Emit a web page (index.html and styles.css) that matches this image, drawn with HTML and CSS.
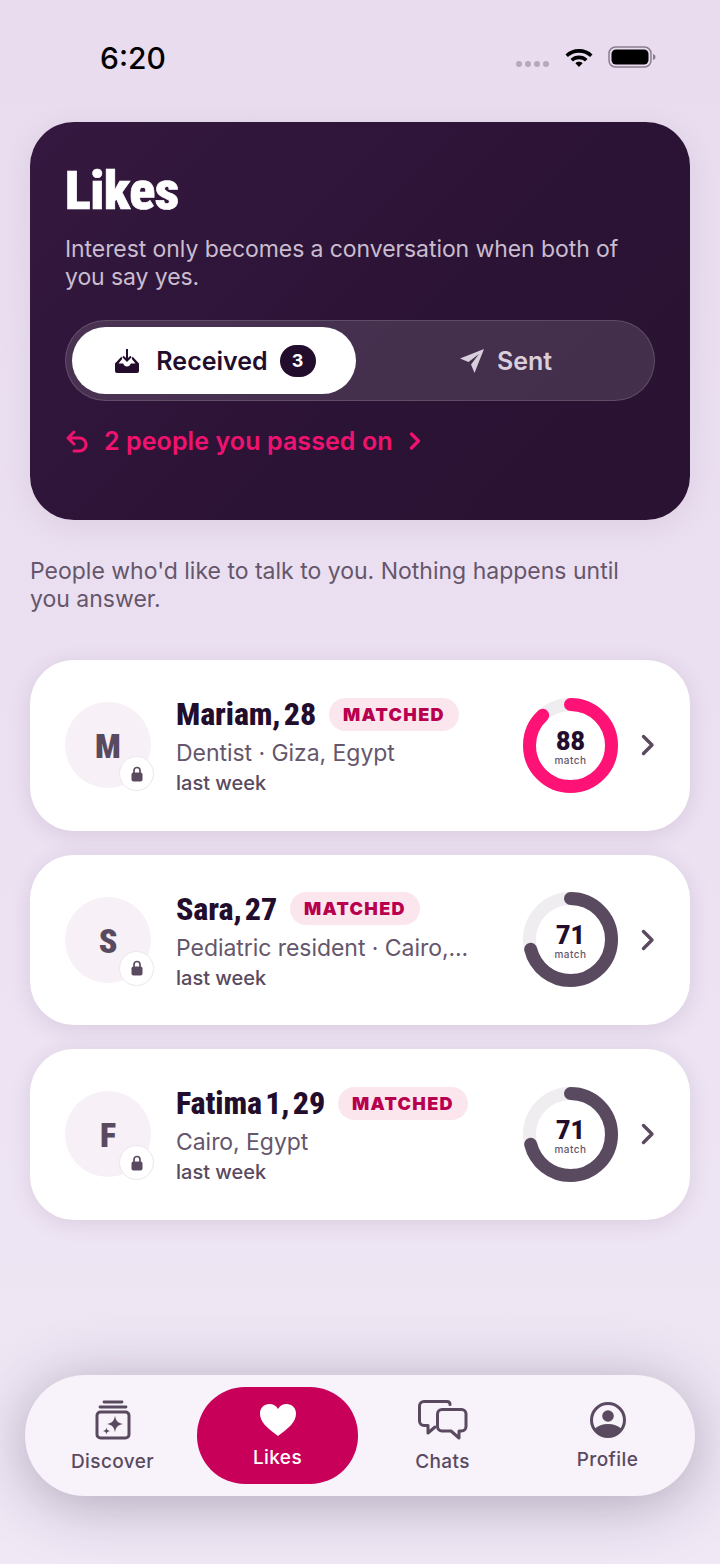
FILE: index.html
```html
<!DOCTYPE html>
<html lang="en">
<head>
  <meta charset="UTF-8" />
  <meta name="viewport" content="width=device-width, initial-scale=1.0">
  <title>Likes</title>
  <link rel="stylesheet" href="styles.css">
</head>
<body>
  <div class="screen">
    <div class="status-bar">
      <span class="time">6:20</span>
      <div class="status-icons">
        <div class="signal"><i></i><i></i><i></i><i></i></div>
        <svg class="wifi" viewBox="0 0 30 22"><path d="M15 3C9.6 3 5 5 1.500 8.400L3.900 11C7 8.200 10.800 6.700 15 6.700S23 8.200 26.100 11L28.500 8.400C25 5 20.400 3 15 3ZM15 9.500C11.700 9.500 8.800 10.700 6.500 12.900L9 15.500C10.600 14 12.700 13.200 15 13.200S19.400 14 21 15.500L23.500 12.900C21.200 10.700 18.300 9.500 15 9.500ZM15 15.800C13.600 15.800 12.400 16.300 11.400 17.200L15 21L18.600 17.200C17.600 16.300 16.400 15.800 15 15.800Z" fill="#000"/></svg>
        <svg class="battery" viewBox="0 0 48 22"><rect x="1" y="1" width="42" height="20" rx="6.500" fill="none" stroke="#8a7f8e" stroke-width="1.500"/><rect x="3.500" y="3.500" width="37" height="15" rx="4.500" fill="#000"/><path d="M45 8C46.800 8.500 47.500 9.600 47.500 11S46.800 13.500 45 14Z" fill="#8a7f8e"/></svg>
      </div>
    </div>

    <section class="hero">
      <h1>Likes</h1>
      <p class="hero-sub">Interest only becomes a conversation when both of you say yes.</p>
      <div class="tabs">
        <div class="tab tab-active">
          <svg class="tab-icon" viewBox="0 0 26 26"><path d="M13 1v11.500M9 8.500l4 4 4-4" fill="none" stroke="#230d2d" stroke-width="2"/><path d="M7.500 8.500 1 15.500V23a2 2 0 0 0 2 2h20a2 2 0 0 0 2-2v-7.500L18.500 8.500 17.800 11l3.700 4.500h-4.700c-.7 2-2 3-3.800 3s-3.100-1-3.800-3H4.500L8.200 11Z" fill="#230d2d"/></svg>
          <span>Received</span>
          <span class="tab-count">3</span>
        </div>
        <div class="tab">
          <svg class="tab-icon" viewBox="0 0 26 26"><path d="M25 1 1 10.500l8.500 3.500L20 6l-8 10.500 3.500 8.500Z" fill="#d9cfdc"/></svg>
          <span>Sent</span>
        </div>
      </div>
      <div class="passed">
        <svg class="passed-back" viewBox="0 0 24 24"><path d="M9 3 3 9l6 6M3 9h11.500a6.500 6.500 0 0 1 0 13H9" fill="none" stroke="#f0126f" stroke-width="3" stroke-linecap="round" stroke-linejoin="round"/></svg>
        <span>2 people you passed on</span>
        <svg class="passed-chev" viewBox="0 0 12 18"><path d="M2.500 2 9.500 9l-7 7" fill="none" stroke="#f0126f" stroke-width="3.200" stroke-linecap="round" stroke-linejoin="round"/></svg>
      </div>
    </section>

    <p class="intro">People who'd like to talk to you. Nothing happens until you answer.</p>

    <div class="cards">
      <article class="card">
        <div class="avatar">
          <span>M</span>
          <div class="lock"><svg viewBox="0 0 12 16"><path d="M3 7V4.500a3 3 0 0 1 6 0V7" fill="none" stroke="#5a4a60" stroke-width="1.700"/><rect x="0.500" y="6.500" width="11" height="9" rx="2" fill="#5a4a60"/></svg></div>
        </div>
        <div class="info">
          <div class="name-row"><span class="name">Mariam, 28</span><span class="badge">MATCHED</span></div>
          <div class="job">Dentist · Giza, Egypt</div>
          <div class="when">last week</div>
        </div>
        <div class="ring">
          <svg viewBox="0 0 95 95"><circle cx="47.500" cy="47.500" r="41" class="ring-track"/><circle cx="47.500" cy="47.500" r="41" class="ring-bar ring-hot" stroke-dasharray="226.700 257.600"/></svg>
          <div class="ring-label"><b>88</b><small>match</small></div>
        </div>
        <svg class="chev" viewBox="0 0 14 22"><path d="M2.500 2.500 11 11l-8.500 8.500" fill="none" stroke="#5a4a60" stroke-width="3.400" stroke-linecap="round" stroke-linejoin="round"/></svg>
      </article>

      <article class="card">
        <div class="avatar">
          <span>S</span>
          <div class="lock"><svg viewBox="0 0 12 16"><path d="M3 7V4.500a3 3 0 0 1 6 0V7" fill="none" stroke="#5a4a60" stroke-width="1.700"/><rect x="0.500" y="6.500" width="11" height="9" rx="2" fill="#5a4a60"/></svg></div>
        </div>
        <div class="info">
          <div class="name-row"><span class="name">Sara, 27</span><span class="badge">MATCHED</span></div>
          <div class="job">Pediatric resident · Cairo,...</div>
          <div class="when">last week</div>
        </div>
        <div class="ring">
          <svg viewBox="0 0 95 95"><circle cx="47.500" cy="47.500" r="41" class="ring-track"/><circle cx="47.500" cy="47.500" r="41" class="ring-bar" stroke-dasharray="182.900 257.600"/></svg>
          <div class="ring-label"><b>71</b><small>match</small></div>
        </div>
        <svg class="chev" viewBox="0 0 14 22"><path d="M2.500 2.500 11 11l-8.500 8.500" fill="none" stroke="#5a4a60" stroke-width="3.400" stroke-linecap="round" stroke-linejoin="round"/></svg>
      </article>

      <article class="card">
        <div class="avatar">
          <span>F</span>
          <div class="lock"><svg viewBox="0 0 12 16"><path d="M3 7V4.500a3 3 0 0 1 6 0V7" fill="none" stroke="#5a4a60" stroke-width="1.700"/><rect x="0.500" y="6.500" width="11" height="9" rx="2" fill="#5a4a60"/></svg></div>
        </div>
        <div class="info">
          <div class="name-row"><span class="name">Fatima 1, 29</span><span class="badge">MATCHED</span></div>
          <div class="job">Cairo, Egypt</div>
          <div class="when">last week</div>
        </div>
        <div class="ring">
          <svg viewBox="0 0 95 95"><circle cx="47.500" cy="47.500" r="41" class="ring-track"/><circle cx="47.500" cy="47.500" r="41" class="ring-bar" stroke-dasharray="182.900 257.600"/></svg>
          <div class="ring-label"><b>71</b><small>match</small></div>
        </div>
        <svg class="chev" viewBox="0 0 14 22"><path d="M2.500 2.500 11 11l-8.500 8.500" fill="none" stroke="#5a4a60" stroke-width="3.400" stroke-linecap="round" stroke-linejoin="round"/></svg>
      </article>
    </div>

    <nav class="tabbar">
      <div class="nav-item">
        <svg class="nav-discover" viewBox="0 0 36 40"><path d="M9 2h18M5 7h26" stroke="#5a4a60" stroke-width="2.800" fill="none" stroke-linecap="round"/><rect x="2" y="12" width="32" height="26" rx="3.500" fill="none" stroke="#5a4a60" stroke-width="3"/><path d="M20 15.500c.8 5.500 3 7.700 8.500 8.500-5.500.8-7.700 3-8.500 8.500-.8-5.500-3-7.700-8.500-8.500 5.500-.8 7.700-3 8.500-8.500ZM11.500 27.500c.4 2.300 1.200 3.100 3.500 3.500-2.300.4-3.100 1.200-3.500 3.500-.4-2.300-1.200-3.100-3.500-3.500 2.300-.4 3.100-1.200 3.500-3.500Z" fill="#5a4a60"/></svg>
        <span>Discover</span>
      </div>
      <div class="nav-item nav-active">
        <svg class="nav-heart" viewBox="0 0 36 32"><path d="M18 32C7 24 0 18 0 9.500 0 4 4 0 9.500 0 13 0 16.200 1.800 18 5 19.800 1.800 23 0 26.500 0 32 0 36 4 36 9.500 36 18 29 24 18 32Z" fill="#fff"/></svg>
        <span>Likes</span>
      </div>
      <div class="nav-item">
        <svg class="nav-chats" viewBox="0 0 50 40"><path d="M32 4.500C32 2.500 30.500 1.500 29 1.500H6C3.500 1.500 1.500 3.500 1.500 6v15c0 2.500 2 4.500 4.500 4.500h4V33l7-6" fill="none" stroke="#5a4a60" stroke-width="3" stroke-linecap="round" stroke-linejoin="round"/><path d="M24 9.500h19.500c2.500 0 4.500 2 4.500 4.500v12.500c0 2.500-2 4.500-4.500 4.500H41v7l-8-7h-9c-2.500 0-4.500-2-4.500-4.500V14c0-2.500 2-4.500 4.500-4.500Z" fill="none" stroke="#5a4a60" stroke-width="3" stroke-linejoin="round"/></svg>
        <span>Chats</span>
      </div>
      <div class="nav-item">
        <svg class="nav-profile" viewBox="0 0 36 36"><circle cx="18" cy="18" r="16.500" fill="none" stroke="#5a4a60" stroke-width="3"/><circle cx="18" cy="14" r="5.800" fill="#5a4a60"/><path d="M4.500 27C8 23.500 12.500 22 18 22s10 1.500 13.500 5C28 31.500 23.500 34.500 18 34.500S8 31.500 4.500 27Z" fill="#5a4a60"/></svg>
        <span>Profile</span>
      </div>
    </nav>
  </div>
</body>
</html>
```

FILE: styles.css
```css
* {
  box-sizing: border-box;
}
body {
  margin: 0;
  font-family: Inter, "Noto Sans", sans-serif;
  color: #230d2d;
}
p, h1 {
  margin: 0;
}
.screen {
  width: 720px;
  height: 1564px;
  display: flex;
  flex-direction: column;
  padding: 0 30px 68px;
  background: linear-gradient(180deg, #e8dcee 0%, #ebe0f1 45%, #f0e8f5 100%);
  overflow: hidden;
}

/* status bar */
.status-bar {
  height: 122px;
  flex: none;
  display: flex;
  justify-content: space-between;
  padding: 40px 34px 0 70px;
}
.time {
  font-size: 30px;
  line-height: 36px;
  font-weight: 500;
  color: #000;
}
.status-icons {
  display: flex;
  align-items: flex-start;
  padding-top: 6px;
}
.signal {
  display: flex;
  gap: 3px;
  margin-top: 15px;
  margin-right: 15px;
}
.signal i {
  width: 6px;
  height: 6px;
  border-radius: 50%;
  background: #b5a9bb;
}
.wifi {
  width: 30px;
  height: 22px;
  margin-right: 14px;
}
.battery {
  width: 48px;
  height: 22px;
}

/* header card */
.hero {
  height: 398px;
  flex: none;
  padding: 36px 35px 0;
  border-radius: 44px;
  background: linear-gradient(135deg, #35183f 0%, #2b1335 60%, #2a1232 100%);
  box-shadow: 0 6px 30px rgba(60, 30, 80, 0.08);
}
.hero h1 {
  font-family: Roboto, "Liberation Sans", sans-serif;
  font-stretch: 75%;
  font-size: 54px;
  line-height: 66px;
  font-weight: 900;
  letter-spacing: -0.600px;
  color: #fff;
  -webkit-text-stroke: 0.600px #fff;
}
.hero-sub {
  margin-top: 11px;
  font-size: 23px;
  line-height: 28px;
  letter-spacing: -0.080px;
  font-weight: 400;
  color: #c9bdcf;
}
.tabs {
  margin-top: 29px;
  height: 81px;
  padding: 6px;
  display: flex;
  border-radius: 41px;
  background: rgba(255, 255, 255, 0.12);
  border: 1px solid rgba(255, 255, 255, 0.14);
}
.tab {
  flex: 1;
  display: flex;
  align-items: center;
  justify-content: center;
  gap: 12px;
  padding-left: 7px;
  font-size: 25px;
  font-weight: 600;
  color: #d9cfdc;
  border-radius: 34px;
}
.tab-active {
  flex: none;
  width: 284px;
  padding-left: 2px;
  background: #fff;
  color: #230d2d;
}
.tab-active .tab-icon {
  margin-right: 4px;
}
.tab-icon {
  width: 26px;
  height: 26px;
}
.tab-count {
  width: 36px;
  height: 32px;
  border-radius: 16px;
  background: #230d2d;
  color: #fff;
  font-size: 18px;
  font-weight: 700;
  line-height: 32px;
  text-align: center;
}
.passed {
  margin-top: 24px;
  display: flex;
  align-items: center;
  font-size: 25px;
  line-height: 32px;
  font-weight: 600;
  letter-spacing: 0.090px;
  color: #f0126f;
}
.passed-back {
  width: 24px;
  height: 24px;
  margin-right: 15px;
}
.passed-chev {
  width: 12px;
  height: 18px;
  margin-left: 16px;
}

.intro {
  margin-top: 37px;
  max-width: 600px;
  font-size: 23px;
  line-height: 28px;
  color: #65566c;
}

/* people */
.cards {
  margin-top: 47px;
  display: flex;
  flex-direction: column;
  gap: 24px;
}
.card {
  height: 170.500px;
  display: flex;
  align-items: center;
  padding: 0 32px 0 35px;
  border-radius: 44px;
  background: #fff;
  box-shadow: 0 4px 22px rgba(70, 40, 90, 0.12);
}
.avatar {
  width: 86px;
  height: 86px;
  flex: none;
  position: relative;
  display: flex;
  align-items: center;
  justify-content: center;
  padding-top: 2px;
  border-radius: 50%;
  background: #f7f0f6;
  font-family: Roboto, "Liberation Sans", sans-serif;
  font-stretch: 87%;
  font-size: 34px;
  font-weight: 900;
  color: #5a4a60;
}
.lock {
  position: absolute;
  right: -3px;
  bottom: -3px;
  width: 35px;
  height: 35px;
  display: flex;
  align-items: center;
  justify-content: center;
  border-radius: 50%;
  background: #fff;
  border: 1px solid #ece6ee;
}
.lock svg {
  width: 12px;
  height: 16px;
}
.info {
  margin-left: 25px;
  padding-top: 2px;
  width: 292px;
  flex: none;
}
.name-row {
  display: flex;
  align-items: center;
  gap: 13px;
  height: 36px;
}
.name {
  font-family: Roboto, "Liberation Sans", sans-serif;
  font-stretch: 75%;
  font-size: 32px;
  font-weight: 800;
  letter-spacing: -0.100px;
  word-spacing: -4px;
  color: #230d2d;
  white-space: nowrap;
}
.badge {
  height: 33px;
  padding: 0 14px;
  border-radius: 17px;
  background: #fbe6ee;
  color: #b8004f;
  font-size: 18px;
  font-weight: 900;
  line-height: 33px;
  letter-spacing: 1.300px;
}
.job {
  margin-top: 6px;
  font-size: 23px;
  line-height: 30px;
  letter-spacing: -0.050px;
  color: #65566c;
  white-space: nowrap;
}
.when {
  margin-top: 2px;
  font-size: 20px;
  line-height: 26px;
  font-weight: 500;
  color: #5a4a60;
}
.ring {
  width: 95px;
  height: 95px;
  flex: none;
  margin-left: 55px;
  position: relative;
}
.ring svg {
  display: block;
  width: 95px;
  height: 95px;
  transform: rotate(-90deg);
}
.ring circle {
  fill: none;
  stroke-width: 13;
}
.ring-track {
  stroke: #efedf0;
}
.ring-bar {
  stroke: #5a4a60;
  stroke-linecap: round;
}
.ring-hot {
  stroke: #ff1275;
}
.ring-label {
  position: absolute;
  inset: 0;
  padding-top: 3px;
  display: flex;
  flex-direction: column;
  align-items: center;
  justify-content: center;
}
.ring-label b {
  margin-top: 1px;
  font-family: Roboto, sans-serif;
  font-size: 25px;
  line-height: 25px;
  font-weight: 900;
  color: #230d2d;
}
.ring-label small {
  font-size: 10px;
  line-height: 12px;
  font-weight: 500;
  letter-spacing: 0.500px;
  color: #65566c;
}
.chev {
  width: 14px;
  height: 22px;
  margin-left: 23px;
  flex: none;
}

/* bottom nav */
.tabbar {
  margin: auto -5px 0;
  height: 121px;
  padding: 12px 7px;
  flex: none;
  display: grid;
  grid-template-columns: repeat(4, 161px);
  gap: 4px;
  border-radius: 60px;
  background: #f8f2fb;
  box-shadow: 0 8px 60px rgba(50, 40, 70, 0.34);
}
.nav-item {
  display: flex;
  flex-direction: column;
  align-items: center;
  justify-content: center;
  padding-top: 2px;
  gap: 10px;
  font-size: 19px;
  line-height: 24px;
  font-weight: 500;
  letter-spacing: 0.400px;
  color: #5a4a60;
  border-radius: 48px;
}
.nav-active {
  background: #c8005a;
  color: #fff;
}
.nav-discover {
  width: 36px;
  height: 40px;
}
.nav-heart {
  width: 36px;
  height: 32px;
}
.nav-chats {
  width: 50px;
  height: 40px;
}
.nav-profile {
  width: 36px;
  height: 36px;
}
```
